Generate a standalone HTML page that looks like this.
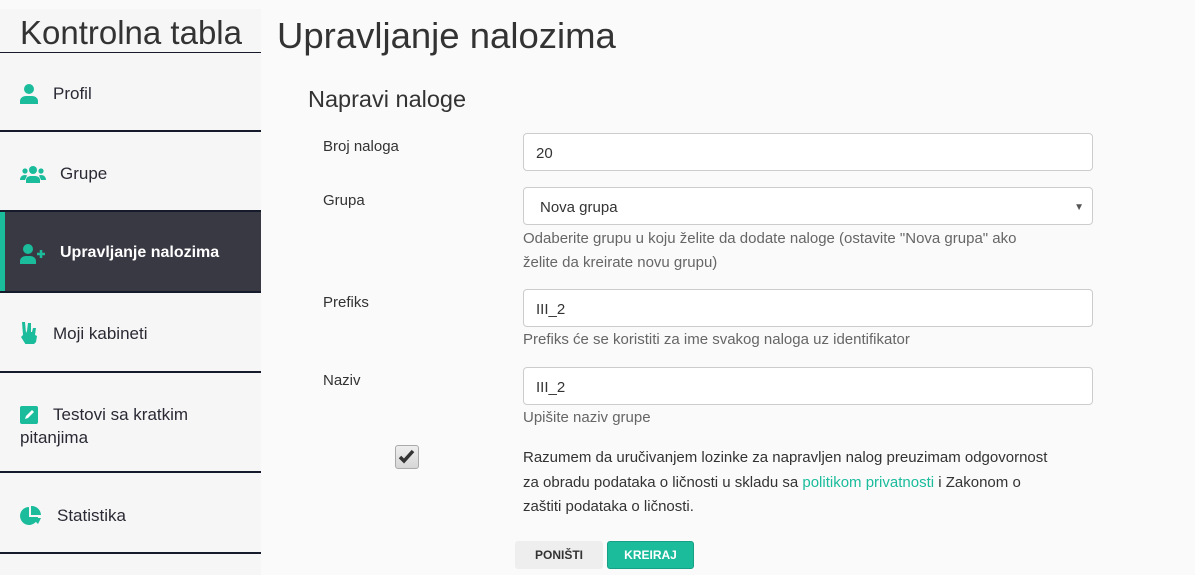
<!DOCTYPE html>
<html><head><meta charset="utf-8"><style>
*{box-sizing:border-box;margin:0;padding:0}
body{width:1195px;height:575px;overflow:hidden;background:#fafafa;font-family:"Liberation Sans",sans-serif;color:#333;position:relative}
.sb{position:absolute;left:0;top:9px;width:261px;height:566px;background:#f6f6f6}
.t{position:absolute;left:20px;top:14px;font-size:33px;color:#333;white-space:nowrap}
.ln{position:absolute;left:0;width:261px;height:2px;background:#161b2c}
.it{position:absolute;left:0;width:261px;font-size:17px;color:#2a2a35}
.it svg{position:absolute}
.a{position:absolute}
input,.sel{position:absolute;left:523px;width:570px;height:38px;border:1px solid #ccc;border-radius:4px;background:#fff;font:15px "Liberation Sans",sans-serif;color:#333;padding-left:12px;padding-top:2px}
.lb{position:absolute;left:323px;font-size:15px;color:#333}
.hp{position:absolute;left:523px;font-size:15px;color:#666;line-height:24px}
</style></head><body>
<div class="sb"></div>
<div class="t">Kontrolna tabla</div>
<div class="ln" style="top:52px;height:1px"></div>
<div class="it" style="top:84px"><svg style="left:20px;top:0" width="18" height="20" viewBox="0 0 18 20"><circle cx="9" cy="5" r="5" fill="#1abc9c"/><path d="M0 20v-3c0-3 3-5 6-5h6c3 0 6 2 6 5v3z" fill="#1abc9c"/></svg><span style="position:absolute;left:53px">Profil</span></div>
<div class="ln" style="top:130px"></div>
<div class="it" style="top:164px"><svg style="left:20px;top:2px" width="26" height="17" viewBox="0 0 26 17"><circle cx="13" cy="4" r="4" fill="#1abc9c"/><circle cx="5" cy="5" r="2.6" fill="#1abc9c"/><circle cx="21" cy="5" r="2.6" fill="#1abc9c"/><path d="M6 17v-3c0-3 3-4 5-4h4c2 0 5 1 5 4v3z M0 14c0-3 2-5 5-5 1 0 2 .5 2 .5L5 14z M26 14c0-3-2-5-5-5-1 0-2 .5-2 .5L21 14z" fill="#1abc9c"/></svg><span style="position:absolute;left:60px">Grupe</span></div>
<div class="ln" style="top:210px"></div>
<div style="position:absolute;left:0;top:212px;width:261px;height:79px;background:#393943"></div>
<div style="position:absolute;left:0;top:212px;width:5px;height:79px;background:#1abc9c"></div>
<div class="it" style="top:244px;color:#fff;font-weight:bold;font-size:16px"><svg style="left:20px;top:0" width="26" height="20" viewBox="0 0 26 20"><circle cx="8" cy="5" r="5" fill="#1abc9c"/><path d="M0 20v-3c0-3 3-5 6-5h4c3 0 6 2 6 5v3z" fill="#1abc9c"/><path d="M21 6v8M17 10h8" stroke="#1abc9c" stroke-width="2.5"/></svg><span style="position:absolute;left:60px">Upravljanje nalozima</span></div>
<div class="ln" style="top:291px"></div>
<div class="it" style="top:324px"><svg style="left:20px;top:-2px" width="18" height="22" viewBox="0 0 18 22"><path d="M2 0h3l1 11 1-2 1-8h3l0 9 1 0 1-4h3l-1 7 2 1-1 6-3 3H6L1 15l2-2z" fill="#1abc9c"/></svg><span style="position:absolute;left:53px">Moji kabineti</span></div>
<div class="ln" style="top:371px"></div>
<div class="it" style="top:403px;line-height:23px"><svg style="left:20px;top:3px" width="18" height="18" viewBox="0 0 18 18"><rect width="18" height="18" rx="2" fill="#1abc9c"/><path d="M5 13l1-3 6-6 2 2-6 6z" fill="#fff"/></svg><span style="position:absolute;left:20px;text-indent:33px;width:180px">Testovi sa kratkim pitanjima</span></div>
<div class="ln" style="top:471px"></div>
<div class="it" style="top:506px"><svg style="left:20px;top:0" width="22" height="20" viewBox="0 0 22 20"><path d="M9 1A9 9 0 1 0 18 11H9z" fill="#1abc9c"/><path d="M11 0v9h10A9.5 9.5 0 0 0 11 0z" fill="#1abc9c"/><path d="M12 12h9l-3 6z" fill="#1abc9c"/></svg><span style="position:absolute;left:57px">Statistika</span></div>
<div class="ln" style="top:552px"></div>

<div class="a" style="left:277px;top:15px;font-size:36.5px;color:#333">Upravljanje nalozima</div>
<div class="a" style="left:308px;top:86px;font-size:23.5px;color:#333">Napravi naloge</div>

<div class="lb" style="top:138px">Broj naloga</div>
<input style="top:133px" value="20">
<div class="lb" style="top:192px">Grupa</div>
<div class="sel" style="top:187px;padding-left:16px;line-height:36px">Nova grupa<span style="position:absolute;right:8px;font-size:10px;color:#555">▼</span></div>
<div class="hp" style="top:227px">Odaberite grupu u koju želite da dodate naloge (ostavite "Nova grupa" ako<br>želite da kreirate novu grupu)</div>
<div class="lb" style="top:294px">Prefiks</div>
<input style="top:289px" value="III_2">
<div class="hp" style="top:328px">Prefiks će se koristiti za ime svakog naloga uz identifikator</div>
<div class="lb" style="top:372px">Naziv</div>
<input style="top:367px" value="III_2">
<div class="hp" style="top:406px">Upišite naziv grupe</div>

<div class="a" style="left:395px;top:445px;width:24px;height:24px;border:1px solid #aaa;border-radius:3px;background:linear-gradient(#eee,#d6d6d6)"><svg width="22" height="22" viewBox="0 0 22 22"><path d="M4 11l4 4 9-10" stroke="#333" stroke-width="3.5" fill="none"/></svg></div>
<div class="a" style="left:523px;top:446px;font-size:15px;line-height:24.5px;color:#333;white-space:nowrap">Razumem da uručivanjem lozinke za napravljen nalog preuzimam odgovornost<br>za obradu podataka o ličnosti u skladu sa <span style="color:#1abc9c">politikom privatnosti</span> i Zakonom o<br>zaštiti podataka o ličnosti.</div>

<div class="a" style="left:515px;top:541px;width:88px;height:28px;background:#eee;border-radius:3px;font-size:12px;font-weight:bold;color:#333;text-align:center;line-height:28px">PONIŠTI</div>
<div class="a" style="left:607px;top:541px;width:87px;height:28px;background:#1abc9c;border:1px solid #16a085;border-radius:3px;font-size:12px;font-weight:bold;color:#fff;text-align:center;line-height:26px">KREIRAJ</div>
</body></html>
